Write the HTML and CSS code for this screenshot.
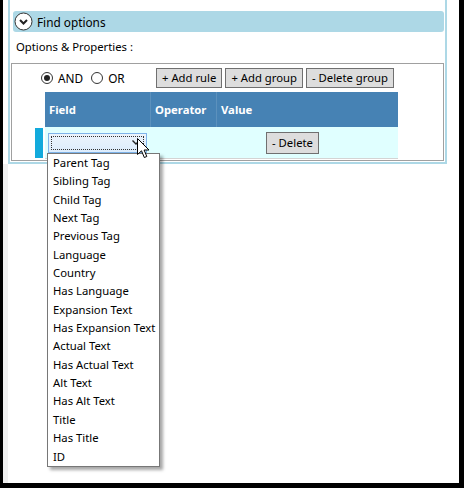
FILE: index.html
```html
<!DOCTYPE html>
<html lang="en">
<head>
  <meta charset="UTF-8">
  <meta name="viewport" content="width=device-width, initial-scale=1.0">
  <title>Find options</title>
  <link rel="stylesheet" href="styles.css">
</head>
<body>
  <div class="window">
    <div class="panel">
      <div class="expander-header">
        <svg class="expander-icon" width="19" height="19" viewBox="0 0 19 19">
          <circle cx="9.5" cy="9.5" r="8.5" fill="#fff" stroke="#333" stroke-width="1"/>
          <path d="M6 8 L9.5 11.5 L13 8" fill="none" stroke="#222" stroke-width="2"/>
        </svg>
        <span>Find options</span>
      </div>
      <div class="section-label">Options &amp; Properties :</div>

      <div class="builder">
        <div class="toolbar">
          <div class="conditions">
            <label class="radio"><span class="radio-dot checked"></span>AND</label>
            <label class="radio"><span class="radio-dot"></span>OR</label>
          </div>
          <div class="actions">
            <button class="btn">+ Add rule</button>
            <button class="btn">+ Add group</button>
            <button class="btn">- Delete group</button>
          </div>
        </div>

        <div class="rules">
          <div class="rules-head">
            <div class="col-field">Field</div>
            <div class="col-op">Operator</div>
            <div class="col-value">Value</div>
          </div>
          <div class="rule-row">
            <div class="row-marker"></div>
            <div class="row-cells">
              <div class="col-field">
                <div class="combo">
                  <div class="combo-focus"></div>
                  <svg class="combo-arrow" width="8" height="5" viewBox="0 0 8 5">
                    <path d="M0.5 0.5 L4 4 L7.5 0.5" fill="none" stroke="#222" stroke-width="1.4"/>
                  </svg>
                </div>
              </div>
              <div class="col-op"></div>
              <div class="col-value">
                <button class="btn btn-delete">- Delete</button>
              </div>
            </div>
          </div>
        </div>
      </div>
    </div>
    <div class="filler"></div>
  </div>

  <!-- open combo box list -->
  <ul class="dropdown">
    <li>Parent Tag</li>
    <li>Sibling Tag</li>
    <li>Child Tag</li>
    <li>Next Tag</li>
    <li>Previous Tag</li>
    <li>Language</li>
    <li>Country</li>
    <li>Has Language</li>
    <li>Expansion Text</li>
    <li>Has Expansion Text</li>
    <li>Actual Text</li>
    <li>Has Actual Text</li>
    <li>Alt Text</li>
    <li>Has Alt Text</li>
    <li>Title</li>
    <li>Has Title</li>
    <li>ID</li>
  </ul>

  <svg class="cursor" width="13" height="21" viewBox="0 0 13 21">
    <path d="M0.5 0.5 L0.5 16.5 L4.5 12.8 L7.3 19.5 L9.8 18.5 L7.1 12 L12 12 Z" fill="#fff" stroke="#000" stroke-width="1" stroke-linejoin="round"/>
  </svg>
</body>
</html>
```

FILE: styles.css
```css
body {
  margin: 0;
  background-color: #000;
  font-family: "Noto Sans", sans-serif;
  font-size: 11.3px;
  color: #000;
}
.window {
  margin-left: 3px;
  width: 456px;
  height: 483px;
  background-color: #fff;
  display: flex;
  flex-direction: column;
}
.panel {
  margin-left: 5px;
  width: 435px;
  border: 2px solid #add8e6;
  border-top: none;
  padding-bottom: 1px;
}
.filler {
  flex: 1;
  width: 5px;
  background-color: #f0f0f0;
}
.expander-header {
  margin: 11px 1px 0 3px;
  height: 21px;
  background-color: #add8e6;
  border-radius: 3px;
  display: flex;
  align-items: center;
  font-size: 11.8px;
}
.expander-icon {
  margin-left: 1px;
  margin-right: 4px;
}
.section-label {
  margin-top: 7px;
  padding-left: 6px;
  line-height: 16px;
}
.builder {
  margin: 8px 1px 0 1px;
  border: 1px solid #a0a0a0;
  padding: 4px 0 1px 0;
}
.toolbar {
  display: flex;
  align-items: center;
  height: 20px;
}
.conditions {
  display: flex;
  align-items: center;
  width: 115px;
  margin-left: 29px;
}
.radio {
  display: flex;
  align-items: center;
  font-size: 11.8px;
  margin-right: 8px;
}
.radio-dot {
  width: 10px;
  height: 10px;
  border: 1px solid #333;
  border-radius: 50%;
  margin-right: 5px;
  position: relative;
  background-color: #fff;
}
.radio-dot.checked::after {
  content: "";
  position: absolute;
  left: 2px;
  top: 2px;
  width: 6px;
  height: 6px;
  border-radius: 50%;
  background-color: #222;
}
.actions {
  display: flex;
  gap: 3px;
}
.btn {
  height: 20px;
  padding: 0 5px;
  background-color: #dddddd;
  border: 1px solid #707070;
  font-family: "Noto Sans", sans-serif;
  font-size: 11.3px;
  color: #000;
  line-height: 16px;
  white-space: nowrap;
}
.rules {
  margin-top: 4px;
  margin-left: 23px;
}
.rules-head {
  margin-left: 10px;
  width: 353px;
  height: 35px;
  display: flex;
  background-color: #4682b4;
  color: #fff;
  font-weight: bold;
}
.rules-head div {
  display: flex;
  align-items: center;
  padding-left: 4px;
  box-sizing: border-box;
}
.col-field {
  width: 106px;
  box-sizing: border-box;
}
.col-op {
  width: 66px;
  box-sizing: border-box;
}
.col-value {
  width: 181px;
  box-sizing: border-box;
}
.rules-head .col-field,
.rules-head .col-op {
  border-right: 1px solid rgba(255, 255, 255, 0.12);
}
.rule-row {
  display: flex;
  height: 32px;
}
.row-marker {
  width: 8px;
  margin: 1px 2px 1px 0;
  background-color: #12aadc;
}
.row-cells {
  width: 353px;
  display: flex;
  align-items: center;
  background-color: #e0ffff;
  border-bottom: 1px solid #d4d4d4;
}
.row-cells .col-field {
  padding-left: 3px;
}
.combo {
  width: 99px;
  height: 20px;
  box-sizing: border-box;
  border: 1px solid #7eb4ea;
  background: linear-gradient(#ecf4fc, #dcecfc);
  position: relative;
}
.combo-focus {
  position: absolute;
  left: 2px;
  top: 2px;
  right: 2px;
  bottom: 2px;
  border: 1px dotted #333;
}
.combo-arrow {
  position: absolute;
  right: 6px;
  top: 6px;
}
.row-cells .col-value {
  padding-left: 49px;
}
.btn-delete {
  height: 22px;
  width: 53px;
  padding: 0;
}
.dropdown {
  position: absolute;
  left: 47px;
  top: 153px;
  width: 111px;
  margin: 0;
  padding: 0;
  list-style: none;
  background-color: #fff;
  border: 1px solid #777;
  box-shadow: 3px 3px 3px rgba(0, 0, 0, 0.35);
}
.dropdown li {
  height: 18.35px;
  line-height: 18px;
  padding-left: 5px;
  white-space: nowrap;
}
.cursor {
  position: absolute;
  left: 137px;
  top: 138px;
}
```
